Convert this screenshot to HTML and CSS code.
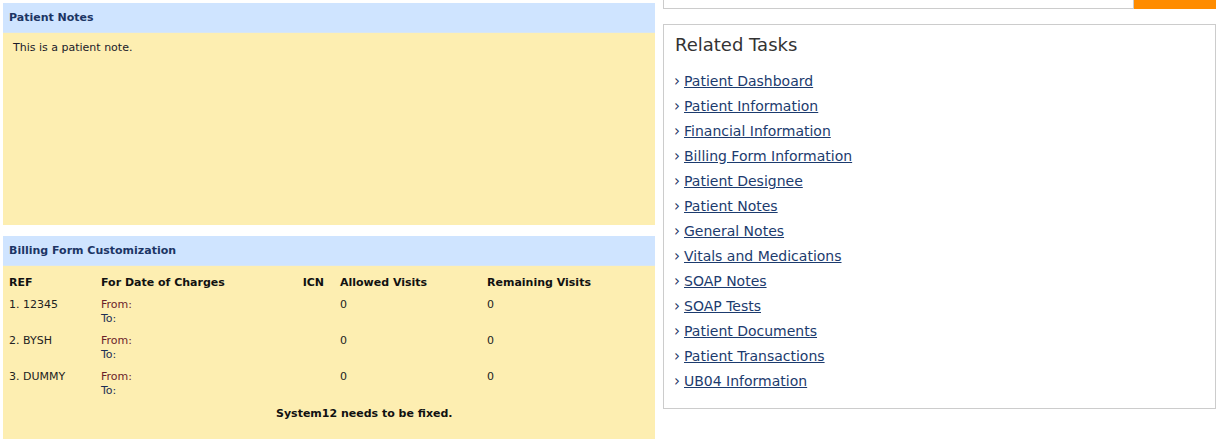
FILE: index.html
```html
<!DOCTYPE html>
<html>
<head>
<meta charset="utf-8">
<link rel="stylesheet" href="styles.css">
</head>
<body>
<div class="page">
  <div class="left">
    <section class="panel notes">
      <h2 class="panel-head">Patient Notes</h2>
      <div class="panel-body notes-body">This is a patient note.</div>
    </section>
    <section class="panel billing">
      <h2 class="panel-head">Billing Form Customization</h2>
      <div class="panel-body billing-body">
        <table class="bill">
          <thead>
            <tr><th class="c-ref">REF</th><th class="c-date">For Date of Charges</th><th class="c-icn">ICN</th><th class="c-allow">Allowed Visits</th><th class="c-rem">Remaining Visits</th></tr>
          </thead>
          <tbody>
            <tr><td>1. 12345</td><td><span class="from">From:</span><br><span class="to">To:</span></td><td></td><td>0</td><td>0</td></tr>
            <tr><td>2. BYSH</td><td><span class="from">From:</span><br><span class="to">To:</span></td><td></td><td>0</td><td>0</td></tr>
            <tr><td>3. DUMMY</td><td><span class="from">From:</span><br><span class="to">To:</span></td><td></td><td>0</td><td>0</td></tr>
          </tbody>
        </table>
        <p class="bill-foot">System12 needs to be fixed.</p>
      </div>
    </section>
  </div>
  <div class="right">
    <div class="search">
      <div class="search-input"></div>
      <div class="search-btn"></div>
    </div>
    <div class="tasks">
      <h3 class="tasks-title">Related Tasks</h3>
      <ul class="task-list">
        <li><a href="#">Patient Dashboard</a></li>
        <li><a href="#">Patient Information</a></li>
        <li><a href="#">Financial Information</a></li>
        <li><a href="#">Billing Form Information</a></li>
        <li><a href="#">Patient Designee</a></li>
        <li><a href="#">Patient Notes</a></li>
        <li><a href="#">General Notes</a></li>
        <li><a href="#">Vitals and Medications</a></li>
        <li><a href="#">SOAP Notes</a></li>
        <li><a href="#">SOAP Tests</a></li>
        <li><a href="#">Patient Documents</a></li>
        <li><a href="#">Patient Transactions</a></li>
        <li><a href="#">UB04 Information</a></li>
      </ul>
    </div>
  </div>
</div>
</body>
</html>
```
FILE: styles.css
```css
html, body {
  margin: 0;
  padding: 0;
  background: #ffffff;
}
body {
  font-family: "DejaVu Sans", Verdana, sans-serif;
  font-size: 11px;
  color: #1a1a1a;
}
.page {
  display: flex;
  gap: 8px;
  padding: 0 7px 0 3px;
}
.left {
  width: 652px;
  flex: none;
  padding-top: 3px;
  display: flex;
  flex-direction: column;
  gap: 11px;
}
.right {
  flex: 1;
}
.panel-head {
  margin: 0;
  height: 30px;
  box-sizing: border-box;
  padding: 8px 0 0 6px;
  background: #cfe4ff;
  color: #1c3565;
  font-size: 11px;
  font-weight: bold;
  border-bottom: 1px solid #d8e6f2;
}
.panel-body {
  background: #fdeeb1;
}
.notes-body {
  height: 192px;
  box-sizing: border-box;
  padding: 8px 10px;
  color: #1a1a2a;
}
.billing-body {
  height: 174px;
  box-sizing: border-box;
  padding: 10px 0 0 6px;
}
.bill {
  border-collapse: collapse;
}
.bill th {
  text-align: left;
  font-weight: bold;
  color: #111;
  padding: 0 0 8px 0;
  line-height: 14px;
}
.bill td {
  vertical-align: top;
  padding: 0 0 8px 0;
  line-height: 14px;
  color: #222;
}
.c-ref { width: 92px; }
.c-date { width: 199px; }
.bill th.c-icn { width: 24px; text-align: right; padding-right: 16px; }
.c-allow { width: 147px; }
.c-rem { width: 140px; }
.from { color: #6b1f2a; }
.to { color: #1c2f55; }
.bill-foot {
  margin: 0;
  padding: 1px 0 0 267px;
  font-weight: bold;
  color: #111;
}
.search {
  display: flex;
  height: 9px;
}
.search-input {
  flex: 1;
  border: 1px solid #cccccc;
  border-top: none;
  height: 8px;
}
.search-btn {
  width: 82px;
  height: 9px;
  background: #ff8c00;
}
.tasks {
  margin-top: 15px;
  border: 1px solid #cccccc;
  padding: 9px 10px 14px 10px;
  height: 385px;
  box-sizing: border-box;
}
.tasks-title {
  margin: 0 0 13px 1px;
  font-size: 18px;
  font-weight: normal;
  color: #333333;
  line-height: 22px;
}
.task-list {
  list-style: none;
  margin: 0;
  padding: 0;
}
.task-list li {
  font-size: 14px;
  line-height: 25px;
  height: 25px;
}
.task-list li::before {
  content: "›";
  color: #1c3565;
  display: inline-block;
  width: 10px;
  font-size: 15px;
}
.task-list a {
  color: #1c3b6e;
  text-decoration: underline;
}
```
